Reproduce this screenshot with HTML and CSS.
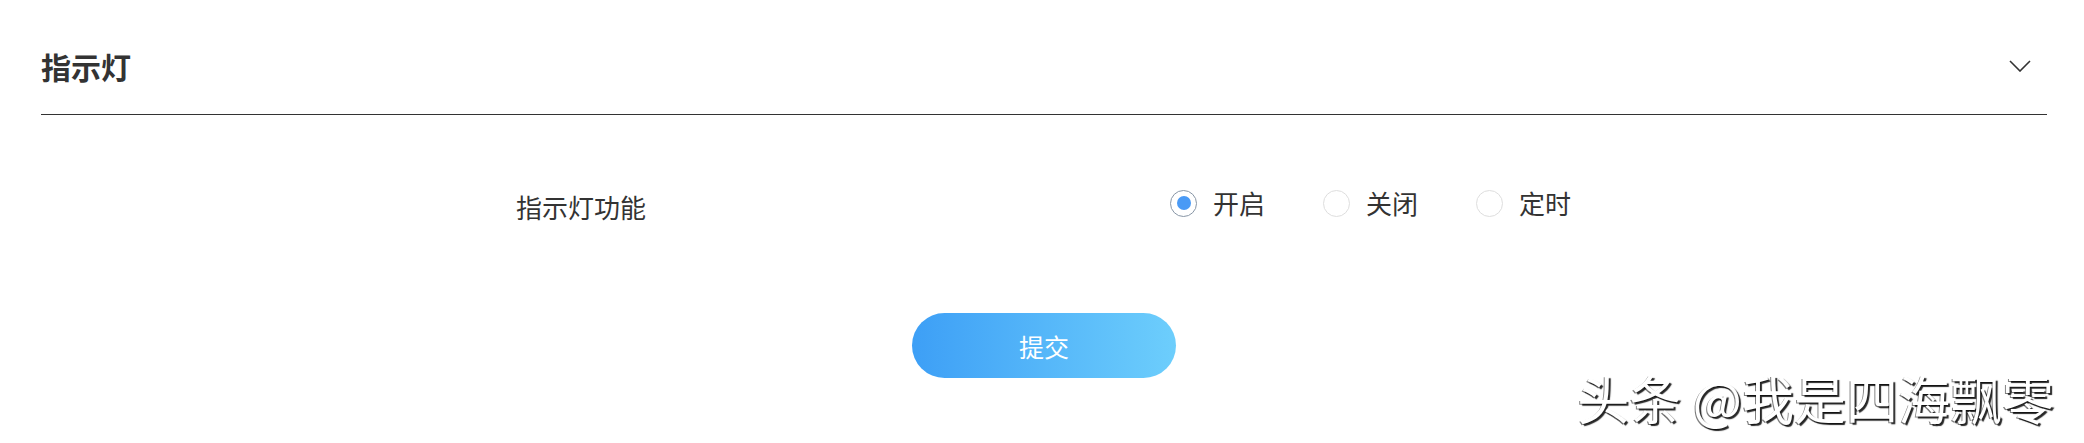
FILE: index.html
```html
<!DOCTYPE html>
<html lang="zh-CN">

<head>
    <meta charset="UTF-8">
    <meta name="viewport" content="width=device-width, initial-scale=1.0">
    <title>指示灯</title>
    <link rel="stylesheet" href="styles.css">
</head>

<body>
    <section class="panel">
        <div class="panel-head">
            <h2 class="panel-title">指示灯</h2>
            <svg class="chevron" width="22" height="12" viewBox="0 0 22 12">
                <polyline points="1,1 11,11 21,1" fill="none" stroke="#333" stroke-width="1.6" />
            </svg>
        </div>

        <form class="panel-body">
            <div class="form-row">
                <span class="field-label">指示灯功能</span>
                <div class="radio-group">
                    <label class="radio">
                        <input type="radio" name="light" value="on" checked>
                        <span class="radio-mark"></span>开启
                    </label>
                    <label class="radio">
                        <input type="radio" name="light" value="off">
                        <span class="radio-mark"></span>关闭
                    </label>
                    <label class="radio">
                        <input type="radio" name="light" value="timer">
                        <span class="radio-mark"></span>定时
                    </label>
                </div>
            </div>

            <div class="form-actions">
                <button type="button" class="submit">提交</button>
            </div>
        </form>
    </section>

    <div class="watermark">头条 @我是四海飘零</div>
</body>

</html>
```

FILE: styles.css
```css
* {
    box-sizing: border-box;
}

body {
    margin: 0;
    background: #fff;
    color: #333;
    font-family: "Noto Sans CJK SC", "Noto Sans", sans-serif;
}

.panel {
    padding: 0 37px 0 41px;
}

.panel-head {
    display: flex;
    justify-content: space-between;
    align-items: center;
    padding: 46px 16px 28px 0;
    border-bottom: 1px solid #333;
}

.panel-title {
    margin: 0;
    font-size: 30px;
    line-height: 40px;
    font-weight: bold;
    color: #333;
}

.form-row {
    display: flex;
    align-items: flex-start;
    margin-top: 70px;
    padding-left: 475px;
}

.field-label {
    width: 654px;
    padding-top: 4px;
    font-size: 26px;
    line-height: 36px;
}

.radio-group {
    display: flex;
    gap: 58px;
}

.radio {
    display: flex;
    align-items: center;
    gap: 16px;
    font-size: 26px;
    line-height: 36px;
    cursor: pointer;
}

.radio input {
    display: none;
}

.radio-mark {
    display: flex;
    align-items: center;
    justify-content: center;
    width: 27px;
    height: 27px;
    border: 1px solid #dedede;
    border-radius: 50%;
}

.radio input:checked + .radio-mark {
    border-color: #8896a6;
}

.radio input:checked + .radio-mark::after {
    content: "";
    width: 14px;
    height: 14px;
    border-radius: 50%;
    background: #4a9af5;
}

.form-actions {
    display: flex;
    justify-content: center;
    margin-top: 88px;
}

.submit {
    width: 264px;
    height: 65px;
    border: none;
    border-radius: 33px;
    background: linear-gradient(90deg, #3d9ff6, #6dcefc);
    color: #fff;
    font-family: inherit;
    font-size: 25px;
}

.watermark {
    position: absolute;
    top: 368px;
    right: 30px;
    font-size: 52px;
    line-height: 60px;
    color: #fff;
    text-shadow: 2px 2px 1px rgba(0, 0, 0, 0.85), -1px 1px 0 rgba(0, 0, 0, 0.5);
}
```
